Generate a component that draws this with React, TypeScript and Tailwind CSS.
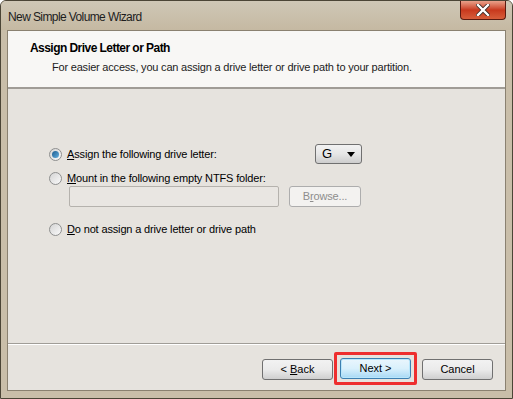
import React from "react";

const font = { fontFamily: '"Liberation Sans", Arial, sans-serif' };

const Radio = ({ checked }: { checked?: boolean }) => (
  <span className="relative w-[13px] h-[13px] rounded-full border border-[#8e8f8f] bg-gradient-to-br from-[#d4d4d4] to-[#fafafa] flex items-center justify-center shrink-0">
    {checked && (
      <span className="w-[7px] h-[7px] rounded-full bg-gradient-to-br from-[#1b5c8f] to-[#64b0e0]" />
    )}
  </span>
);

const Button = ({ children, active }: { children: React.ReactNode; active?: boolean }) => (
  <div
    className={
      "w-[71px] h-[21px] rounded-[3px] border flex items-center justify-center text-[11px] text-black " +
      (active
        ? "border-[#3c7fb1] bg-gradient-to-b from-[#eaf6fd] via-[#d9f0fc] to-[#a7d9f5] shadow-[inset_0_0_0_1px_#b9e6fb]"
        : "border-[#707070] bg-gradient-to-b from-[#f2f2f2] via-[#ebebeb] to-[#cfcfcf]")
    }
  >
    {children}
  </div>
);

export default function App() {
  return (
    <div style={font} className="w-[513px] h-[399px] bg-[#c9bea9] border border-[#4b4536] rounded-t-[6px] flex flex-col overflow-hidden">
      <div className="h-[29px] flex items-start justify-between bg-gradient-to-b from-[#cfc7b6] to-[#c5b9a2]">
        <span className="pl-[7px] pt-[7px] text-[12px] tracking-[-0.6px] text-[#1d1d1d]">New Simple Volume Wizard</span>
        <div className="mr-[6px] w-[46px] h-[19px] rounded-b-[4px] border border-t-0 border-[#5a1a10] bg-gradient-to-b from-[#e8a08a] via-[#c8381d] to-[#d75d3a] flex items-center justify-center">
          <svg width="14" height="12" viewBox="0 0 14 12">
            <path d="M2 1 L12 11 M12 1 L2 11" stroke="#3a2a25" strokeWidth="4" strokeLinecap="square" />
            <path d="M2 1 L12 11 M12 1 L2 11" stroke="#ffffff" strokeWidth="2.4" strokeLinecap="square" />
          </svg>
        </div>
      </div>
      <div className="flex-1 mx-[6px] mb-[7px] border border-[#8a8170] flex flex-col bg-[#e6e3de]">
        <div className="h-[58px] bg-[#f8f7f5] border-b-2 border-[#a09c96] pl-[22px] pt-[8px]">
          <div className="text-[12px] tracking-[-0.55px] font-bold text-black">Assign Drive Letter or Path</div>
          <div className="pl-[22px] pt-[2px] text-[11px] tracking-[-0.2px] text-[#1c1c1c]">
            For easier access, you can assign a drive letter or drive path to your partition.
          </div>
        </div>
        <div className="flex-1 pl-[41px] pt-[55px] text-[11px] tracking-[-0.15px] text-black">
          <div className="flex items-center h-[20px]">
            <div className="w-[266px] flex items-center gap-[5px]">
              <Radio checked />
              <span><u>A</u>ssign the following drive letter:</span>
            </div>
            <div className="w-[47px] h-[20px] rounded-[3px] border border-[#707070] bg-gradient-to-b from-[#f2f2f2] via-[#e6e6e6] to-[#cdcdcd] flex items-center justify-between px-[6px]">
              <span className="text-[13px]">G</span>
              <svg width="8" height="5" viewBox="0 0 8 5"><path d="M0 0 H8 L4 5 Z" fill="#000" /></svg>
            </div>
          </div>
          <div className="flex items-center gap-[5px] mt-[7px] h-[15px]">
            <Radio />
            <span><u>M</u>ount in the following empty NTFS folder:</span>
          </div>
          <div className="flex items-center mt-0 pl-[20px] gap-[10px]">
            <div className="w-[210px] h-[21px] border border-[#b5b2ad] rounded-[2px] bg-[#e9e6e2]" />
            <div className="w-[72px] h-[21px] rounded-[3px] border border-[#adadad] bg-[#f3f2f0] flex items-center justify-center text-[#8d8d8d]">
              B<u>r</u>owse...
            </div>
          </div>
          <div className="flex items-center gap-[5px] mt-[15px] h-[15px]">
            <Radio />
            <span><u>D</u>o not assign a drive letter or drive path</span>
          </div>
        </div>
        <div className="border-t border-[#a09d97] shadow-[inset_0_1px_0_#ffffff] h-[47px] flex items-start pt-[15px] pl-[254px]">
          <Button><span>&lt; <u>B</u>ack</span></Button>
          <div className="ml-[1px] mt-[-7px] p-[3px] border-[3px] border-[#ee2e2e] rounded-[2px]">
            <Button active>Next &gt;</Button>
          </div>
          <div className="ml-[5px]">
            <Button>Cancel</Button>
          </div>
        </div>
      </div>
    </div>
  );
}
